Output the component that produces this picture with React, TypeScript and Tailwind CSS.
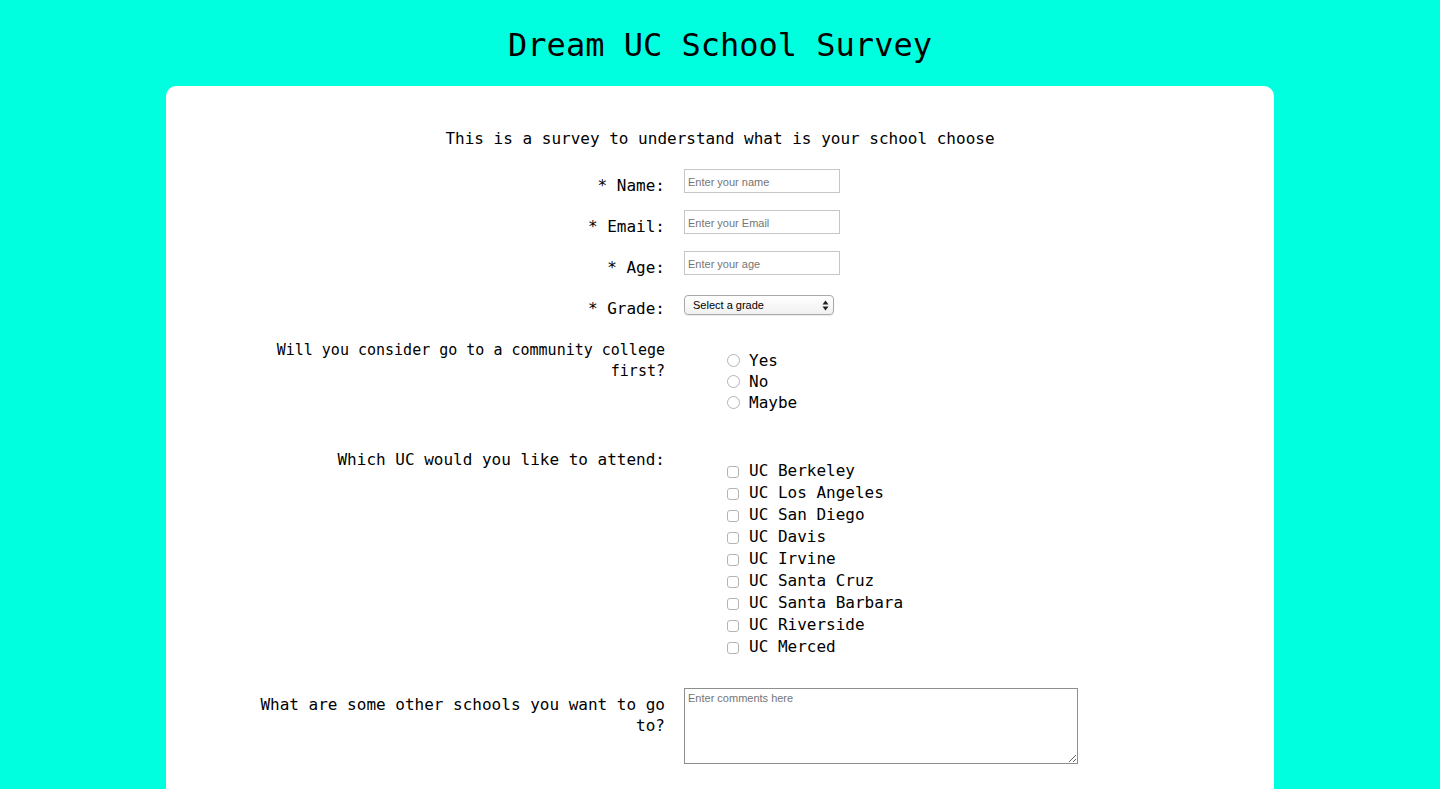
import React from "react";

const mono = "font-['DejaVu_Sans_Mono','Liberation_Mono',monospace]";
const sans = "font-['Liberation_Sans','Helvetica',sans-serif]";

const schools = [
  "UC Berkeley",
  "UC Los Angeles",
  "UC San Diego",
  "UC Davis",
  "UC Irvine",
  "UC Santa Cruz",
  "UC Santa Barbara",
  "UC Riverside",
  "UC Merced",
];

function TextRow({ label, placeholder, top }: { label: string; placeholder: string; top: string }) {
  return (
    <div className={`flex items-start ${top}`}>
      <label className="w-[499px] shrink-0 pl-[79px] pt-[5px] text-right text-[16px] leading-[24px]">
        * {label}:
      </label>
      <input
        placeholder={placeholder}
        className={`ml-[19px] h-[24px] w-[156px] border border-[#c6c6c6] px-[3px] pt-[1px] text-[11px] text-black outline-none placeholder:text-[#757575] ${sans}`}
      />
    </div>
  );
}

export default function App() {
  return (
    <main className={`min-h-screen bg-[#00ffdf] text-black ${mono}`}>
      {/* Header */}
      <header className="flex h-[86px] items-center justify-center pt-[3px]">
        <h1 className="text-[32px] leading-none">Dream UC School Survey</h1>
      </header>

      {/* Survey card */}
      <section className="mx-auto w-[1108px] rounded-t-[10px] bg-white pt-[41px] pb-[60px]">
        <p className="text-center text-[16px] leading-[24px]">
          This is a survey to understand what is your school choose
        </p>

        <TextRow label="Name" placeholder="Enter your name" top="mt-[18px]" />
        <TextRow label="Email" placeholder="Enter your Email" top="mt-[12px]" />
        <TextRow label="Age" placeholder="Enter your age" top="mt-[12px]" />

        {/* Grade */}
        <div className="mt-[12px] flex items-start">
          <label className="w-[499px] shrink-0 pl-[79px] pt-[5px] text-right text-[16px] leading-[24px]">
            * Grade:
          </label>
          <div
            className={`relative ml-[19px] mt-[3px] flex h-[20px] w-[150px] items-center rounded-[4px] border border-[#a9a9a9] bg-gradient-to-b from-white to-[#f1f1f1] pl-[8px] pt-[1px] text-[11px] shadow-[0_1px_1px_rgba(0,0,0,0.08)] ${sans}`}
          >
            Select a grade
            <svg className="absolute right-[4px] top-[4px]" width="7" height="11" viewBox="0 0 7 11">
              <path d="M3.5 0.5 L6.5 4.5 L0.5 4.5 Z" fill="#222" />
              <path d="M3.5 10.5 L6.5 6.5 L0.5 6.5 Z" fill="#222" />
            </svg>
          </div>
        </div>

        {/* Community college */}
        <div className="mt-[17px] flex items-start">
          <label className="w-[499px] shrink-0 pl-[79px] pt-[2px] text-right text-[15px] leading-[21px]">
            Will you consider go to a community college first?
          </label>
          <ul className="ml-[19px] mt-[12px] pl-[43px] text-[16px] leading-[21px]">
            {["Yes", "No", "Maybe"].map((opt) => (
              <li key={opt} className="flex items-center">
                <span className="mr-[9px] inline-block h-[13px] w-[13px] rounded-full border border-[#b4b4b4] bg-white" />
                {opt}
              </li>
            ))}
          </ul>
        </div>

        {/* UC schools */}
        <div className="mt-[35px] flex items-start">
          <label className="w-[499px] shrink-0 pl-[79px] pt-[1px] text-right text-[16px] leading-[21px]">
            Which UC would you like to attend:
          </label>
          <ul className="ml-[19px] mt-[12px] pl-[43px] text-[16px] leading-[22px]">
            {schools.map((s) => (
              <li key={s} className="flex items-center">
                <span className="mr-[10px] mt-[2px] inline-block h-[12px] w-[12px] rounded-[3px] border border-[#b4b4b4] bg-white" />
                {s}
              </li>
            ))}
          </ul>
        </div>

        {/* Other schools */}
        <div className="mt-[30px] flex items-start">
          <label className="w-[499px] shrink-0 pl-[79px] pt-[6px] text-right text-[16px] leading-[21px]">
            What are some other schools you want to go to?
          </label>
          <textarea
            placeholder="Enter comments here"
            className={`ml-[19px] h-[76px] w-[394px] border border-[#8e8e8e] px-[3px] py-[1px] text-[11px] outline-none placeholder:text-[#757575] ${sans}`}
          />
        </div>
      </section>
    </main>
  );
}
